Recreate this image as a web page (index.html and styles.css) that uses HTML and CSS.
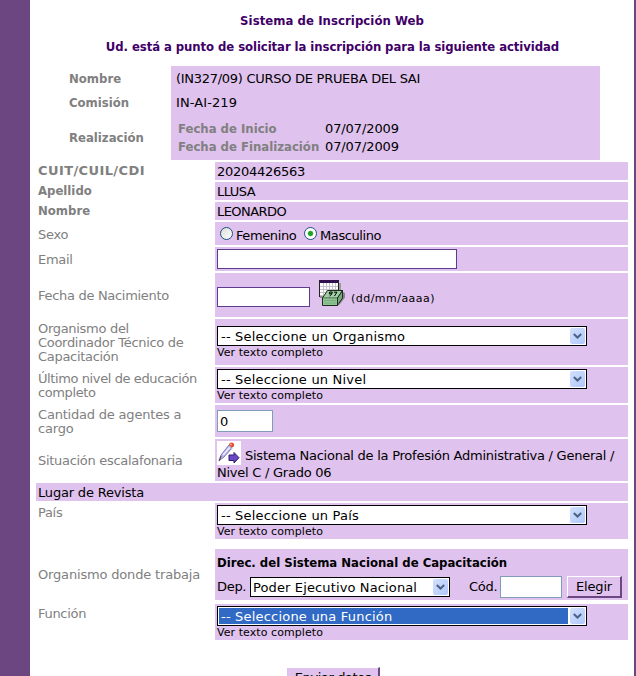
FILE: index.html
```html
<!DOCTYPE html>
<html lang="es">
<head>
<meta charset="utf-8">
<title>Sistema de Inscripción Web</title>
<link rel="stylesheet" href="styles.css">
</head>
<body>
<main class="page">
  <h1 class="title">Sistema de Inscripción Web</h1>
  <h2 class="subtitle">Ud. está a punto de solicitar la inscripción para la siguiente actividad</h2>

  <section class="course">
    <div class="course-labels">
      <b class="r-name">Nombre</b>
      <b class="r-com">Comisión</b>
      <b class="r-real">Realización</b>
    </div>
    <div class="course-values">
      <div class="r-name">(IN327/09) CURSO DE PRUEBA DEL SAI</div>
      <div class="r-com code">IN-AI-219</div>
      <div class="dates">
        <b>Fecha de Inicio</b><span>07/07/2009</span>
        <b>Fecha de Finalización</b><span>07/07/2009</span>
      </div>
    </div>
  </section>

  <form class="form">
    <div class="row h18"><b class="label wide">CUIT/CUIL/CDI</b><div class="value">20204426563</div></div>
    <div class="row h18"><b class="label">Apellido</b><div class="value caps">LLUSA</div></div>
    <div class="row h18"><b class="label">Nombre</b><div class="value caps">LEONARDO</div></div>
    <div class="row h23"><span class="label">Sexo</span>
      <div class="value radios"><i class="radio"></i><span class="fem">Femenino</span><i class="radio on"></i><span>Masculino</span></div></div>
    <div class="row h24"><span class="label">Email</span><div class="value"><div class="input email"></div></div></div>
    <div class="row h44"><span class="label">Fecha de Nacimiento</span>
      <div class="value birth"><div class="input date"></div>
        <svg class="calendar" width="27" height="27" viewBox="0 0 27 27">
          <path d="M0 0h20v18H0z" fill="#fff"/>
          <path d="M4.500 3v14M7.500 3v14M10.500 3v14M13.500 3v14M16.500 3v14M1 6.500h19M1 9.500h19M1 12.500h19M1 15.500h19" stroke="#c4c2c8"/>
          <path d="M0 0h20v3H0z" fill="#30104c"/><path d="M.500 0v17H4M19.500 0v10" stroke="#222" fill="none"/><path d="M21 3v8" stroke="#999" stroke-width="2"/>
          <path d="M20 25.500l6-8V13l-2-1z" fill="#8c8494"/>
          <path d="M8.500 10.500h15l-5 7.500h-15z" fill="#9fcfa4" stroke="#1c2b1c"/>
          <path d="M3.500 18h15v7.500h-15z" fill="#8fc493" stroke="#1c2b1c"/>
          <path d="M18.500 18l5-7.500V18l-5 7.500z" fill="#78a87c" stroke="#1c2b1c"/>
          <path d="M4 18h14" stroke="#9fcfa4"/>
          <path d="M5 20.500h12M5 23h12" stroke="#79ad7e"/>
          <path d="M10.500 16l2-1.500.8-2.500h-2.500l-.6 1.800h2.500M15 12.200h3l-2.500 3.800" stroke="#000" fill="none"/>
        </svg>
        <span class="hint">(dd/mm/aaaa)</span></div></div>
    <div class="row h46"><span class="label">Organismo del<br>Coordinador Técnico de<br>Capacitación</span>
      <div class="value org"><div class="select"><span>-- Seleccione un Organismo</span><i class="arrow"><svg width="9" height="6" viewBox="0 0 9 6"><path d="M.800 1l3.700 3.500L8.200 1"/></svg></i></div><div class="more">Ver texto completo</div></div></div>
    <div class="row h36"><span class="label tight">Último nivel de educación completo</span>
      <div class="value"><div class="select"><span>-- Seleccione un Nivel</span><i class="arrow"><svg width="9" height="6" viewBox="0 0 9 6"><path d="M.800 1l3.700 3.500L8.200 1"/></svg></i></div><div class="more">Ver texto completo</div></div></div>
    <div class="row h32"><span class="label agentes">Cantidad de agentes a cargo</span><div class="value count"><div class="input plain agents">0</div></div></div>
    <div class="row h42"><span class="label">Situación escalafonaria</span>
      <div class="value status"><svg class="edit" width="24" height="24" viewBox="0 0 24 24">
          <path d="M0 0h24v24H0z" fill="#fff"/>
          <path d="M4 14L12 4l3 3-8 9-4 3z" fill="#b9b5ea" stroke="#7d77b8"/>
          <path d="M6 14l8-9" stroke="#eeecff" stroke-width="1.500"/>
          <path d="M2 20l2-5" stroke="#555" stroke-width="1.300"/>
          <circle cx="14.500" cy="4" r="2.500" fill="#e04a2c"/><circle cx="14" cy="3.500" r="1" fill="#ffa387"/><path d="M12 5l3 3" stroke="#a8c0d8" stroke-width="1.500"/>
          <path d="M12 14H17v-2.500l5 5.200L17 22v-2.500h-5z" fill="#6a48c4" stroke="#2b1c70"/>
        </svg> Sistema Nacional de la Profesión Administrativa / General / Nivel C / Grado 06</div></div>
    <div class="section">Lugar de Revista</div>
    <div class="row h36 pais"><span class="label top">País</span>
      <div class="value"><div class="select"><span>-- Seleccione un País</span><i class="arrow"><svg width="9" height="6" viewBox="0 0 9 6"><path d="M.800 1l3.700 3.500L8.200 1"/></svg></i></div><div class="more">Ver texto completo</div></div></div>
    <div class="row h51"><span class="label spaced">Organismo donde trabaja</span>
      <div class="value work"><b>Direc. del Sistema Nacional de Capacitación</b>
        <div class="line"><span class="dep">Dep.</span><div class="select small"><span>Poder Ejecutivo Nacional</span><i class="arrow"><svg width="9" height="6" viewBox="0 0 9 6"><path d="M.800 1l3.700 3.500L8.200 1"/></svg></i></div><span class="cod">Cód.</span><div class="input plain codbox"></div><button type="button" class="btn">Elegir</button></div></div></div>
    <div class="row h36"><span class="label top">Función</span>
      <div class="value"><div class="select active"><span>-- Seleccione una Función</span><i class="arrow"><svg width="9" height="6" viewBox="0 0 9 6"><path d="M.800 1l3.700 3.500L8.200 1"/></svg></i></div><div class="more">Ver texto completo</div></div></div>
  </form>
  <button type="button" class="btn send">Enviar datos</button>
</main>
</body>
</html>
```
FILE: styles.css
```css
* { box-sizing: border-box; }
html { height: 100%; overflow: hidden; }
body {
  margin: 0;
  height: 676px;
  overflow: hidden;
  font: 13px/18px "DejaVu Sans", Verdana, sans-serif;
  letter-spacing: -0.26px;
  color: #000;
  background: #fff;
}
b, h1, h2 {
  font: bold 13px/18px "DejaVu Sans Condensed", "DejaVu Sans", Tahoma, sans-serif;
  letter-spacing: 0;
}
.page {
  height: 676px;
  padding-top: 12px;
  border-left: 30px solid #6b4681;
  border-right: 2px solid #6b4681;
}
.title, .subtitle { margin: 0; text-align: center; color: #3f0068; white-space: nowrap; }
.title { letter-spacing: 0.06px; }
.subtitle { margin-top: 8px; padding-left: 1px; letter-spacing: -0.08px; }

.course {
  display: grid;
  grid-template-columns: 102px 429px;
  height: 94px;
  margin: 10px 0 2px 39px;
}
.course-labels b { display: block; color: #808080; }
.course-values { background: #dfc2ed; padding-left: 5px; }
.r-name { padding-top: 4px; height: 28px; }
.r-com { height: 24px; }
.course .course-labels .r-real { margin-top: 11px; }
.course-values .r-com { height: 23px; letter-spacing: 0.1px; }
.course-values .r-name { letter-spacing: -0.28px; }
.dates {
  display: grid;
  grid-template-columns: 147px auto;
  padding-left: 2px;
  margin-top: 3px;
  letter-spacing: -0.1px;
}
.dates b { color: #808080; }

.form { display: flex; flex-direction: column; gap: 2px; margin: 0 6px; }
.row { display: grid; grid-template-columns: 177px 413px; gap: 2px; }
.label {
  align-self: center;
  padding: 2px 2px 0;
  color: #808080;
  line-height: 14px;
  letter-spacing: -0.3px;
}
b.label { padding-top: 0; letter-spacing: 0; }
b.label.wide { font-family: "DejaVu Sans", Verdana, sans-serif; letter-spacing: 0.4px; }
.label.tight { letter-spacing: -0.4px; }
.label.agentes { letter-spacing: -0.2px; }
.label.spaced { padding-top: 0; letter-spacing: -0.17px; }
.label.top { align-self: start; padding-top: 3px; }
.value { background: #dfc2ed; padding: 0 2px; }
.caps { letter-spacing: -0.55px; }
.h18 { height: 18px; }
.h18 .value { height: 18px; line-height: 19px; }
.h23 { height: 23px; }
.h24 { height: 24px; }
.h32 { height: 32px; }
.h36 { height: 36px; }
.h42 { height: 42px; }
.h44 { height: 44px; }
.h46 { height: 46px; }
.h51 { height: 51px; }
.h36 .value { padding-top: 2px; }
.pais { margin-bottom: 8px; }
.h51 + .h36 { margin-top: 2px; }
.section {
  height: 18px;
  padding: 1px 0 0 2px;
  background: #dfc2ed;
  letter-spacing: -0.18px;
}

.radios { display: flex; padding: 5px 0 0 5px; letter-spacing: -0.4px; }
.radios .fem { width: 68px; }
.radio {
  width: 13px;
  height: 13px;
  margin-right: 3px;
  border: 1px solid #1d5281;
  border-radius: 50%;
  background: linear-gradient(135deg, #dcdcd7, #fff);
}
.radio.on { background: radial-gradient(circle, #21a121 0 2px, #5fca5f 2.5px, #fff 3.2px); }

.input { height: 20px; border: 1px solid #5c3c8c; background: #fff; }
.input.plain { height: 22px; border-color: #7f9db9; }
.email { width: 240px; margin-top: 2px; }
.birth { display: flex; }
.date { width: 93px; margin-top: 14px; }
.calendar { margin: 7px 6px 0 9px; }
.hint { margin: 17px 0 0 -1px; font-size: 11px; letter-spacing: 0.47px; }
.org { padding-top: 7px; }
.count { padding-top: 5px; }
.agents { width: 56px; padding: 2px; }

.select {
  display: flex;
  justify-content: space-between;
  width: 370px;
  height: 20px;
  padding: 1px;
  border: 1px solid #000;
  background: #fff;
  line-height: 17px;
  letter-spacing: 0.2px;
}
.select span {
  flex: 1;
  height: 16px;
  padding-left: 2px;
  margin-right: 2px;
  white-space: nowrap;
}
.select.active span { background: #316ac5; color: #fff; }
.arrow {
  display: flex;
  align-items: center;
  justify-content: center;
  width: 15px;
  height: 16px;
  border-radius: 2px;
  background: linear-gradient(135deg, #d4e0fd, #afc8fb);
}
.arrow svg path { fill: none; stroke: #4d6185; stroke-width: 2; }
.more { font-size: 11px; line-height: 14px; letter-spacing: 0.07px; }

.status { padding-top: 8px; letter-spacing: -0.25px; line-height: 17px; }
.edit { float: left; margin: -6px 4px -4px 0; }

.work { padding-top: 5px; }
.work b { display: block; }
.line { display: flex; align-items: center; height: 22px; margin-top: 4px; }
.dep { width: 33px; letter-spacing: -0.3px; }
.select.small { width: 200px; letter-spacing: 0.13px; }
.select.small span { padding-left: 1px; }
.cod { width: 31px; margin-left: 19px; }
.codbox { width: 62px; }
.btn {
  width: 55px;
  height: 22px;
  margin-left: 5px;
  padding: 0;
  border: solid;
  border-width: 1px 2px 2px 1px;
  border-color: #fff #6b4681 #6b4681 #fff;
  background: #dfc2ed;
  font: inherit;
  letter-spacing: -0.17px;
  color: #000;
}
.send {
  display: block;
  width: 94px;
  margin: 27px 0 0 256px;
  padding-left: 1px;
  letter-spacing: -0.4px;
}
```
